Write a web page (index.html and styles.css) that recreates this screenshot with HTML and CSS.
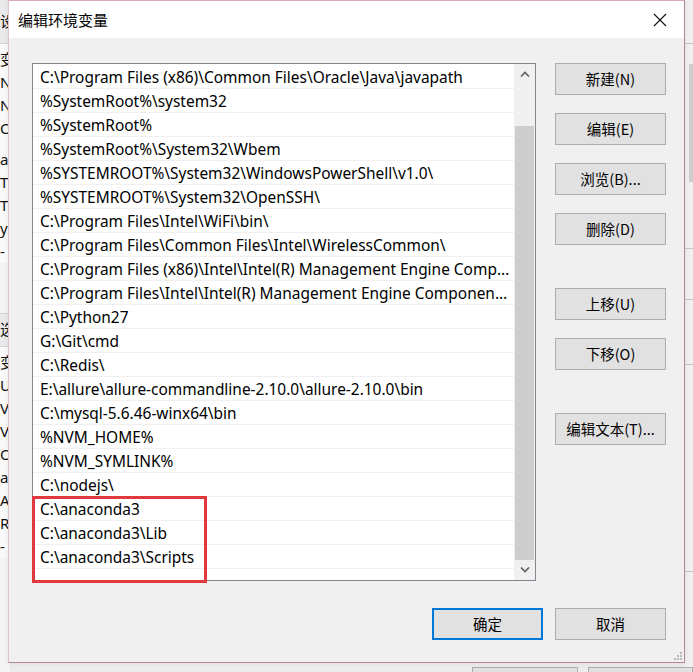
FILE: index.html
```html
<!DOCTYPE html>
<html lang="zh-CN">
<head>
<meta charset="utf-8">
<title>编辑环境变量</title>
<link rel="stylesheet" href="styles.css">
</head>
<body>
<div class="desktop">
  <div class="bg-left">
    <div class="bl-head">设</div>
    <div class="bl-rows">
      <div class="bl-row r1">变</div>
      <div class="bl-row">N</div>
      <div class="bl-row">N</div>
      <div class="bl-row">Or</div>
      <div class="bl-row gap">a</div>
      <div class="bl-row">T</div>
      <div class="bl-row">T</div>
      <div class="bl-row">y</div>
      <div class="bl-row">-</div>
    </div>
    <div class="bl-head2">选</div>
    <div class="bl-rows">
      <div class="bl-row">变</div>
      <div class="bl-row">U</div>
      <div class="bl-row">V</div>
      <div class="bl-row">V</div>
      <div class="bl-row">OS</div>
      <div class="bl-row">a</div>
      <div class="bl-row">A</div>
      <div class="bl-row">R</div>
      <div class="bl-row">-</div>
    </div>
  </div>
  <div class="bg-right">
    <div class="br-line l1"></div>
    <div class="br-bar b1"></div>
    <div class="br-line l2"></div>
    <div class="br-line l3"></div>
    <div class="br-line l4"></div>
    <div class="br-line l5"></div>
  </div>
  <div class="bg-bottom">
    <div class="bg-btn b-ok"></div>
    <div class="bg-btn b-cancel"></div>
  </div>

  <div class="dialog">
    <div class="titlebar">
      <span class="title">编辑环境变量</span>
      <span class="close">
        <svg width="14" height="14" viewBox="0 0 14 14"><path d="M1 1 L13 13 M13 1 L1 13" stroke="#111" stroke-width="1.1" fill="none"/></svg>
      </span>
    </div>
    <div class="content">
      <div class="main">
        <div class="listbox">
          <div class="rows">
            <div class="row">C:\Program Files (x86)\Common Files\Oracle\Java\javapath</div>
            <div class="row">%SystemRoot%\system32</div>
            <div class="row">%SystemRoot%</div>
            <div class="row">%SystemRoot%\System32\Wbem</div>
            <div class="row">%SYSTEMROOT%\System32\WindowsPowerShell\v1.0\</div>
            <div class="row">%SYSTEMROOT%\System32\OpenSSH\</div>
            <div class="row">C:\Program Files\Intel\WiFi\bin\</div>
            <div class="row">C:\Program Files\Common Files\Intel\WirelessCommon\</div>
            <div class="row">C:\Program Files (x86)\Intel\Intel(R) Management Engine Components\DAL</div>
            <div class="row">C:\Program Files\Intel\Intel(R) Management Engine Components\DAL</div>
            <div class="row">C:\Python27</div>
            <div class="row">G:\Git\cmd</div>
            <div class="row">C:\Redis\</div>
            <div class="row">E:\allure\allure-commandline-2.10.0\allure-2.10.0\bin</div>
            <div class="row">C:\mysql-5.6.46-winx64\bin</div>
            <div class="row">%NVM_HOME%</div>
            <div class="row">%NVM_SYMLINK%</div>
            <div class="row">C:\nodejs\</div>
            <div class="row">C:\anaconda3</div>
            <div class="row">C:\anaconda3\Lib</div>
            <div class="row">C:\anaconda3\Scripts</div>
          </div>
          <div class="scrollbar">
            <div class="arrow">
              <svg width="10" height="6" viewBox="0 0 10 6"><path d="M1 5.5 L5 1.5 L9 5.5" stroke="#606060" stroke-width="1.6" fill="none"/></svg>
            </div>
            <div class="track"><div class="thumb"></div></div>
            <div class="arrow">
              <svg width="10" height="6" viewBox="0 0 10 6"><path d="M1 0.5 L5 4.5 L9 0.5" stroke="#606060" stroke-width="1.6" fill="none"/></svg>
            </div>
          </div>
          <div class="highlight"></div>
        </div>
        <div class="side">
          <div class="group">
            <button class="btn">新建(N)</button>
            <button class="btn">编辑(E)</button>
            <button class="btn">浏览(B)...</button>
            <button class="btn">删除(D)</button>
          </div>
          <div class="group">
            <button class="btn">上移(U)</button>
            <button class="btn">下移(O)</button>
          </div>
          <div class="group">
            <button class="btn">编辑文本(T)...</button>
          </div>
        </div>
      </div>
      <div class="footer">
        <button class="btn primary">确定</button>
        <button class="btn">取消</button>
      </div>
    </div>
    <div class="grip">
      <svg width="10" height="10" viewBox="0 0 10 10" fill="#b8b8b8"><rect x="8" y="2" width="2" height="2"/><rect x="5" y="5" width="2" height="2"/><rect x="8" y="5" width="2" height="2"/><rect x="2" y="8" width="2" height="2"/><rect x="5" y="8" width="2" height="2"/><rect x="8" y="8" width="2" height="2"/></svg>
    </div>
  </div>
</div>
</body>
</html>
```

FILE: styles.css
```css
* { box-sizing: border-box; }
html, body { margin: 0; padding: 0; }
body {
  width: 693px;
  height: 672px;
  overflow: hidden;
  background: #f0f0f0;
  font-family: "Noto Sans", "Noto Sans CJK SC", sans-serif;
  color: #000;
}
.desktop {
  position: relative;
  width: 693px;
  height: 672px;
  overflow: hidden;
  background: #ececec;
}

/* background window, left side */
.bg-left {
  width: 10px;
  height: 672px;
  overflow: hidden;
  background: #f4f4f4;
  font-size: 15px;
  line-height: 23px;
  white-space: nowrap;
  color: #111;
}
.bl-head { height: 44px; padding-top: 10px; border-bottom: 1px solid #d4d4d4; background: #eaeaea; }
.bl-rows { background: #fafafa; padding-top: 4px; }
.bl-row { height: 23px; }
.bl-row.gap { margin-top: 8px; }
.bl-head2 { height: 34px; margin-top: 50px; padding-top: 4px; border-top: 1px solid #d4d4d4; border-bottom: 1px solid #d4d4d4; background: #eaeaea; }

/* background window, right side */
.bg-right {
  position: absolute;
  left: 685px;
  top: 0;
  width: 8px;
  height: 672px;
  background: #f0f0f0;
}
.br-line { height: 1px; background: #c8c8c8; margin-top: 43px; }
.br-bar { width: 4px; height: 118px; margin: 20px 0 0 4px; background: #cdcdcd; }
.br-line.l2 { margin-top: 66px; }
.br-line.l3 { margin-top: 50px; }
.br-line.l4 { margin-top: 64px; }
.br-line.l5 { margin-top: 206px; }

.bg-bottom {
  position: absolute;
  left: 0;
  top: 663px;
  width: 693px;
  height: 9px;
  display: flex;
  padding-left: 472px;
  gap: 10px;
}
.bg-btn { width: 111px; height: 12px; margin-top: 4px; background: #e1e1e1; border: 1px solid #adadad; }

/* dialog */
.dialog {
  position: absolute;
  left: 8px;
  top: 0;
  width: 677px;
  height: 663px;
  background: #f0f0f0;
  border: 1px solid #b7858f;
  border-left-color: #e3c3c8;
  border-top-color: #d9aab2;
  box-shadow: 0 0 6px rgba(0,0,0,0.08);
}
.titlebar {
  height: 37px;
  background: #fff;
  display: flex;
  align-items: center;
  justify-content: space-between;
  padding-left: 9px;
}
.title {
  font-family: "Noto Sans CJK SC", sans-serif;
  font-size: 15px;
  color: #000;
  padding-bottom: 1px;
}
.close {
  width: 46px;
  height: 37px;
  display: flex;
  align-items: center;
  justify-content: center;
  margin-right: 1px;
}
.content {
  padding: 25px 18px 0 23px;
}
.main {
  display: flex;
  gap: 19px;
}
.listbox {
  position: relative;
  width: 504px;
  height: 518px;
  border: 1px solid #828790;
  background: #fff;
  display: flex;
}
.rows {
  width: 481px;
  padding-top: 1px;
}
.row {
  height: 24px;
  border-bottom: 1px solid #f0f0f0;
  padding-left: 7px;
  padding-right: 3px;
  font-size: 15.45px;
  line-height: 25px;
  white-space: nowrap;
  overflow: hidden;
  text-overflow: ellipsis;
  color: #000;
}
.scrollbar {
  width: 21px;
  display: flex;
  flex-direction: column;
  background: #f0f0f0;
}
.arrow {
  height: 21px;
  display: flex;
  align-items: center;
  justify-content: center;
}
.track {
  flex: 1;
  padding: 0 1px;
  display: flex;
  flex-direction: column;
}
.thumb {
  margin-top: 41px;
  height: 434px;
  background: #cdcdcd;
}
.highlight {
  position: absolute;
  left: -1px;
  top: 432px;
  width: 175px;
  height: 87px;
  border: 3px solid #e0393e;
}
.side {
  display: flex;
  flex-direction: column;
  gap: 43px;
}
.group {
  display: flex;
  flex-direction: column;
  gap: 18px;
}
.btn {
  width: 111px;
  height: 32px;
  background: #e1e1e1;
  border: 1px solid #adadad;
  font-family: "Noto Sans CJK SC", sans-serif;
  font-size: 14.5px;
  color: #000;
  padding: 0;
  margin: 0;
  line-height: 30px;
}
.btn.primary {
  border: 2px solid #0078d7;
  line-height: 28px;
}
.footer {
  display: flex;
  justify-content: flex-end;
  gap: 12px;
  margin-top: 27px;
}
.grip {
  position: absolute;
  right: 2px;
  bottom: 2px;
  width: 10px;
  height: 10px;
  display: flex;
}
```
